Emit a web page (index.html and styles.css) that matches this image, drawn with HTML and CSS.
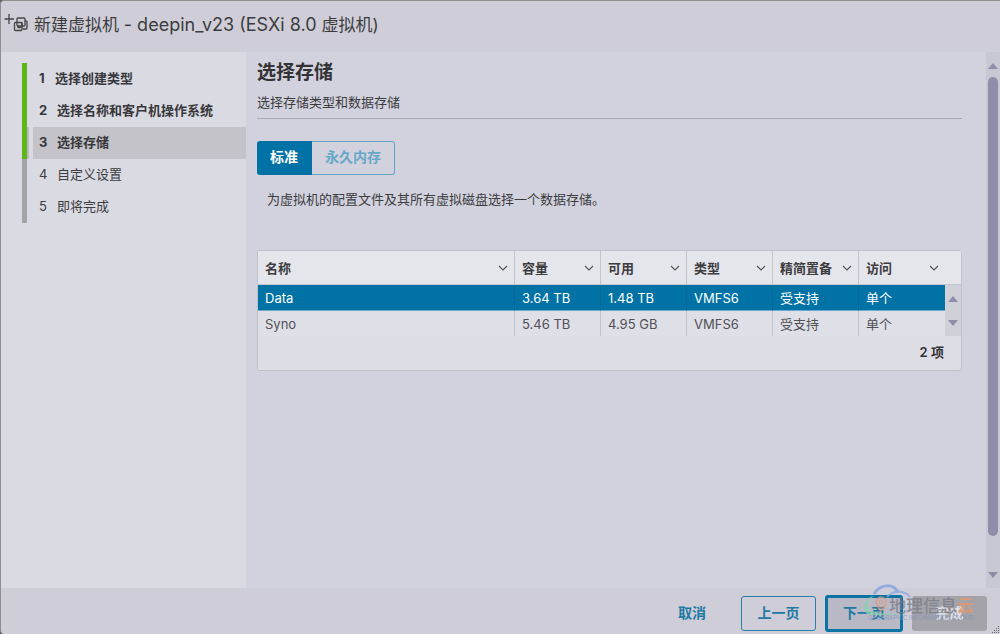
FILE: index.html
```html
<!DOCTYPE html>
<html lang="zh-CN">
<head>
<meta charset="utf-8">
<title>新建虚拟机</title>
<link rel="stylesheet" href="styles.css">
</head>
<body>
<div class="dialog">
  <header class="header">
    <svg class="vm-icon" viewBox="0 0 24 22" width="24" height="22" fill="none" stroke="#444" stroke-width="1.3">
      <path d="M5 1v10M0.500 6h9.500"/>
      <rect x="13" y="5" width="8" height="8" rx="1"/>
      <path d="M21 8h1q1 0 1 1v6q0 1-1 1h-3"/>
      <rect x="10.500" y="9.500" width="7.500" height="8" rx="1"/>
      <path d="M14 12v2.500h3.500M18 9v5"/>
    </svg>
    <h1 class="title">新建虚拟机 <span class="vm-name">- deepin_v23 (ESXi 8.0 </span>虚拟机)</h1>
  </header>

  <div class="body">
    <nav class="side">
      <ol class="steps">
        <li class="step done"><span class="num">1</span>选择创建类型</li>
        <li class="step done wide"><span class="num">2</span>选择名称和客户机操作系统</li>
        <li class="step done wide current"><span class="num">3</span>选择存储</li>
        <li class="step wide"><span class="num">4</span>自定义设置</li>
        <li class="step wide"><span class="num">5</span>即将完成</li>
      </ol>
    </nav>

    <main class="content">
      <h2 class="heading">选择存储</h2>
      <p class="sub">选择存储类型和数据存储</p>
      <div class="toggle">
        <button class="tab active" type="button">标准</button>
        <button class="tab" type="button">永久内存</button>
      </div>
      <p class="hint">为虚拟机的配置文件及其所有虚拟磁盘选择一个数据存储。</p>

      <div class="grid">
        <table class="table">
          <colgroup><col><col class="c"><col class="c"><col class="c"><col class="c"><col class="c"><col class="bar"></colgroup>
          <thead>
            <tr>
              <th><span class="th">名称<svg class="chev" viewBox="0 0 10 6"><path d="M1 1l4 4 4-4"/></svg></span></th>
              <th><span class="th">容量<svg class="chev" viewBox="0 0 10 6"><path d="M1 1l4 4 4-4"/></svg></span></th>
              <th><span class="th">可用<svg class="chev" viewBox="0 0 10 6"><path d="M1 1l4 4 4-4"/></svg></span></th>
              <th><span class="th">类型<svg class="chev" viewBox="0 0 10 6"><path d="M1 1l4 4 4-4"/></svg></span></th>
              <th><span class="th">精简置备<svg class="chev" viewBox="0 0 10 6"><path d="M1 1l4 4 4-4"/></svg></span></th>
              <th class="last"><span class="th">访问<svg class="chev" viewBox="0 0 10 6"><path d="M1 1l4 4 4-4"/></svg></span></th>
              <th class="last"></th>
            </tr>
          </thead>
          <tbody>
            <tr class="selected">
              <td>Data</td><td>3.64 TB</td><td>1.48 TB</td><td>VMFS6</td><td>受支持</td><td class="last">单个</td>
              <td class="mini" rowspan="2"><div class="mini-track"><svg class="arrow" viewBox="0 0 10 6"><path d="M0 6l5-6 5 6z"/></svg><svg class="arrow" viewBox="0 0 10 6"><path d="M0 0l5 6 5-6z"/></svg></div></td>
            </tr>
            <tr>
              <td>Syno</td><td>5.46 TB</td><td>4.95 GB</td><td>VMFS6</td><td>受支持</td><td class="last">单个</td>
            </tr>
          </tbody>
        </table>
        <div class="grid-foot">2 项</div>
      </div>
    </main>

    <div class="scroll">
      <svg class="arrow" viewBox="0 0 10 6"><path d="M0 6l5-6 5 6z"/></svg>
      <div class="thumb"></div>
      <svg class="arrow" viewBox="0 0 10 6"><path d="M0 0l5 6 5-6z"/></svg>
    </div>
  </div>

  <footer class="footer">
    <button class="btn link" type="button">取消</button>
    <button class="btn outline" type="button">上一页</button>
    <button class="btn outline focus" type="button">下一页</button>
    <button class="btn finish" type="button" disabled>完成</button>
    <div class="watermark">
      <svg class="cloud" viewBox="0 0 120 40" fill="none">
        <path d="M14 11C20 1 33 0 38 9" stroke="#7f9fe0" stroke-width="3"/>
        <path d="M27 14C34 6 46 8 50 14" stroke="#86a6e4" stroke-width="2"/>
        <path d="M14 13C3 15 0 28 9 32H48C28 30 14 32 9 25 7 20 8 17 14 13z" fill="#8fcfb0"/>
        <circle cx="21" cy="19" r="5" stroke="#e0967a" stroke-width="1.500"/>
        <circle cx="21" cy="19" r="2" stroke="#e0967a"/>
        <path d="M17 23l4 5 4-5" stroke="#e0967a" stroke-width="1.500"/>
      </svg>
      <span class="mark">地理信息<b class="yun">云</b></span>
      <span class="mark-sub">GEOGRAPHIC INFORMATION CLOUD</span>
    </div>
    <svg class="grip" viewBox="0 0 9 9" fill="#66666c"><path d="M7 1h1v1h-1zM5 3h1v1h-1zM7 3h1v1h-1zM3 5h1v1h-1zM5 5h1v1h-1zM7 5h1v1h-1zM1 7h1v1h-1zM3 7h1v1h-1zM5 7h1v1h-1zM7 7h1v1h-1z"/></svg>
  </footer>
</div>
</body>
</html>
```

FILE: styles.css
```css
* { box-sizing: border-box; }
body {
  margin: 0;
  background: #555;
  color: #3c3c3f;
  font: 13px/20px Inter, "Noto Sans CJK SC", sans-serif;
}
h1, h2, p, ol { margin: 0; padding: 0; }
.dialog {
  display: flex;
  flex-direction: column;
  min-height: 100vh;
  background: #cfced8;
  border: 1px solid #8e8e90;
  border-width: 1px 0 0 1px;
  border-radius: 4px 0 0 4px;
}
.header {
  display: flex;
  gap: 6px;
  height: 51px;
  padding: 12px 3px;
}
.vm-icon { flex: none; }
.title { font-size: 17px; line-height: 24px; font-weight: 400; }
.vm-name { font-size: 18px; }

.body { display: flex; flex: 1; }
.side { width: 245px; padding-top: 11px; padding-left: 21px; background: #dadae3; }
.steps { list-style: none; }
.step {
  display: flex;
  height: 32px;
  padding-left: 12px;
  border-left: 5px solid #a3a3a8;
  line-height: 30px;
}
.step.done { border-color: #5fb715; font-weight: 700; color: #38383b; }
.num { width: 16px; }
.wide .num { width: 18px; }
.current {
  background: linear-gradient(90deg, #b9b9c4 2px, #dadae3 2px 6px, #c3c3c9 6px);
}

.content { flex: 1; padding: 8px 24px 0 11px; background: #d2d2de; }
.heading { font-size: 19px; line-height: 26px; font-weight: 700; color: #333336; }
.sub { padding: 6px 0 6px; border-bottom: 1px solid #a9a9b5; }
.toggle { display: flex; margin-top: 22px; height: 34px; }
.tab {
  padding: 0 13px 2px;
  border: 1px solid #62a3c4;
  border-left: 0;
  border-radius: 0 3px 3px 0;
  background: none;
  color: #67a8c8;
  font: 600 14px/30px Inter, "Noto Sans CJK SC", sans-serif;
}
.tab.active {
  border-color: #0a6f9f;
  border-radius: 3px 0 0 3px;
  background: #0072a5;
  color: #fff;
  font-weight: 700;
}
.hint { margin-top: 14px; padding-left: 10px; }

.grid {
  margin-top: 41px;
  border: 1px solid #c0c0ca;
  border-radius: 3px;
  background: #dddde6;
}
.table { width: 100%; table-layout: fixed; border-collapse: separate; border-spacing: 0; }
.c { width: 86px; }
.bar { width: 16px; }
th, td { padding: 0 7px; text-align: left; border-right: 1px solid #c3c3cb; }
th { height: 34px; background: #e5e5ec; border-bottom: 1px solid #c3c3cb; font-weight: 700; }
.th { display: flex; align-items: center; justify-content: space-between; }
.chev { width: 10px; height: 6px; margin-right: -1px; fill: none; stroke: #55555a; stroke-width: 1.2; }
td { height: 25px; background: #dfdfe8; color: #515155; }
.selected td { height: 26px; background: #0072a5; color: #fff; border-right-color: #086995; border-bottom: 1px solid #6aa9c9; }
th.last, td.last { border-right: 0; }
.selected td.mini { padding: 0; background: #d0d0d9; border: 0; }
.mini-track { display: flex; flex-direction: column; align-items: center; justify-content: space-between; height: 51px; padding: 11px 0 10px; }
.arrow { width: 10px; height: 6px; fill: #8e8eaa; }
.grid-foot { padding: 6px 17px 8px; text-align: right; font-weight: 600; color: #333336; }

.scroll {
  display: flex;
  flex-direction: column;
  align-items: center;
  width: 14px;
  padding: 11px 0 10px;
  background: #c8c8d3;
}
.thumb { width: 10px; flex: 1; margin: 8px 0 36px; border-radius: 5px; background: #8e8eaa; }

.footer {
  position: relative;
  display: flex;
  justify-content: flex-end;
  align-items: flex-start;
  gap: 9px;
  height: 46px;
  padding: 8px 13px 0 0;
}
.btn {
  height: 35px;
  padding: 0 0 2px;
  border: 1px solid transparent;
  border-radius: 3px;
  background: none;
  color: #2079a5;
  font: 700 14px/20px Inter, "Noto Sans CJK SC", sans-serif;
}
.link { width: 80px; font-weight: 600; }
.outline { width: 75px; border-color: #2580aa; }
.focus { width: 78px; height: 37px; margin-top: -1px; border-width: 3px; border-color: #0a73a3; background: #b9b9c6; }
.finish { width: 75px; background: #a3a3a9; color: #e0e0e5; }
.watermark { position: absolute; right: 20px; top: -5px; width: 120px; height: 40px; opacity: 0.75; pointer-events: none; }
.cloud { display: block; width: 120px; height: 40px; }
.mark { position: absolute; left: 29px; top: 11px; font-size: 17px; line-height: 24px; font-weight: 500; color: #777a88; white-space: nowrap; }
.yun { color: #e8966c; }
.mark-sub { position: absolute; left: 8px; top: 31px; font-size: 6px; line-height: 8px; color: #7f93bd; white-space: nowrap; }
.grip { position: absolute; right: 0; bottom: 0; width: 9px; height: 9px; }
```
